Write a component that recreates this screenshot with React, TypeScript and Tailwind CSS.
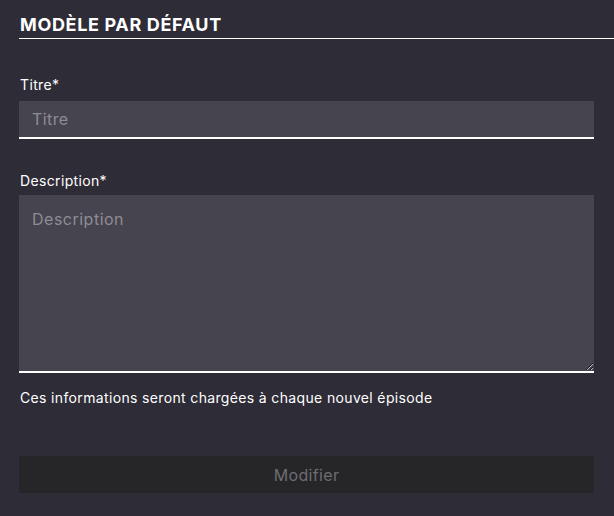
import React from 'react';

export default function App() {
  return (
    <div
      className="min-h-[516px] w-[614px] overflow-hidden bg-[#2e2c36] pl-[19px] pt-[14px] tracking-[0.35px] text-white"
      style={{ fontFamily: 'Inter, "Open Sans", sans-serif' }}
    >
      {/* Header */}
      <div className="-mr-4 border-b border-white pb-[3px] pl-px">
        <h2 className="text-[18px] font-bold uppercase leading-[21px] tracking-[0.65px]">Modèle par défaut</h2>
      </div>

      <form className="mr-[20px] mt-[36px]" onSubmit={(e) => e.preventDefault()}>
        {/* Title */}
        <label className="block pl-px text-[14px] leading-[20px]">Titre*</label>
        <input
          type="text"
          placeholder="Titre"
          className="mt-[6px] block h-[38px] w-full border-b-2 border-white bg-[#46444e] px-[13px] text-[16px] tracking-[0.4px] text-white outline-none placeholder:text-[#8e8c95]"
        />

        {/* Description */}
        <label className="mt-[32px] block pl-px text-[14px] leading-[20px]">Description*</label>
        <textarea
          placeholder="Description"
          className="mt-[4px] block h-[178px] w-full resize-y border-b-2 border-white bg-[#46444e] px-[13px] pt-[12px] text-[16px] tracking-[0.5px] text-white outline-none placeholder:text-[#8e8c95]"
        />

        <p className="mt-[15px] pl-px text-[14px] leading-[20px]">
          Ces informations seront chargées à chaque nouvel épisode
        </p>

        <button
          type="submit"
          disabled
          className="mt-[48px] block h-[37px] w-full bg-[#262628] text-[16px] text-[#6e6d72]"
        >
          Modifier
        </button>
      </form>
    </div>
  );
}
